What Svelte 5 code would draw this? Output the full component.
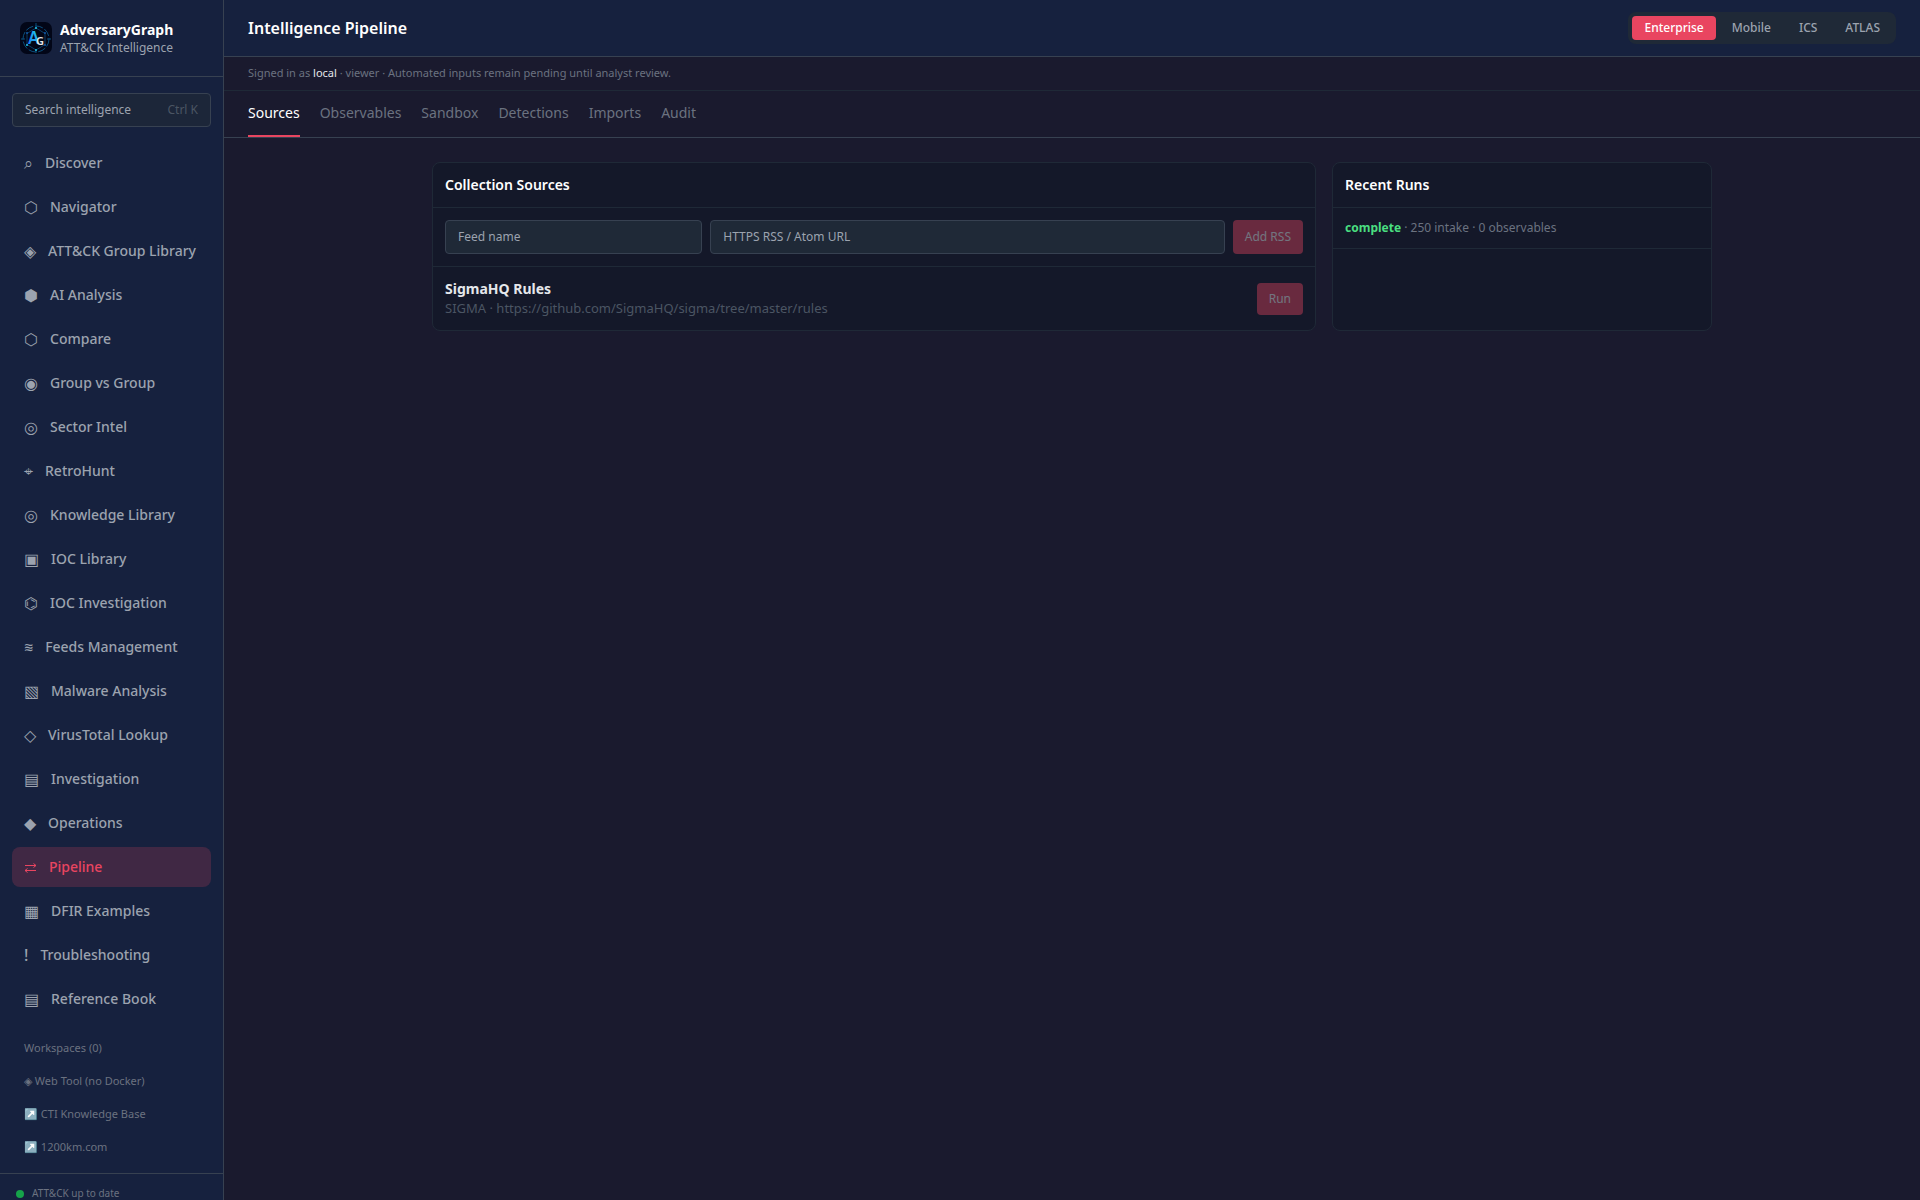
<script>
  const nav = [
    { icon: '⌕', label: 'Discover' },
    { icon: '⬡', label: 'Navigator' },
    { icon: '◈', label: 'ATT&CK Group Library' },
    { icon: '⬢', label: 'AI Analysis' },
    { icon: '⬡', label: 'Compare' },
    { icon: '◉', label: 'Group vs Group' },
    { icon: '◎', label: 'Sector Intel' },
    { icon: '⌖', label: 'RetroHunt' },
    { icon: '◎', label: 'Knowledge Library' },
    { icon: '▣', label: 'IOC Library' },
    { icon: '⌬', label: 'IOC Investigation' },
    { icon: '≋', label: 'Feeds Management', math: true },
    { icon: '▧', label: 'Malware Analysis' },
    { icon: '◇', label: 'VirusTotal Lookup' },
    { icon: '▤', label: 'Investigation' },
    { icon: '◆', label: 'Operations' },
    { icon: 'arrows', label: 'Pipeline' },
    { icon: '▦', label: 'DFIR Examples' },
    { icon: '!', label: 'Troubleshooting' },
    { icon: '▤', label: 'Reference Book' }
  ]
  const links = ['◈ Web Tool (no Docker)', '↗️ CTI Knowledge Base', '↗️ 1200km.com']
  const domains = ['Enterprise', 'Mobile', 'ICS', 'ATLAS']
  const tabs = ['Sources', 'Observables', 'Sandbox', 'Detections', 'Imports', 'Audit']
  const sources = [
    { name: 'SigmaHQ Rules', type: 'SIGMA', url: 'https://github.com/SigmaHQ/sigma/tree/master/rules' }
  ]
  const runs = [{ status: 'complete', intake: 250, observables: 0 }]

  let page = $state('Pipeline')
  let domain = $state('Enterprise')
  let tab = $state('Sources')
  let feedName = $state('')
  let feedUrl = $state('')
</script>

<div class="app">
  <aside class="sidebar">
    <div class="brand">
      <svg class="logo" viewBox="0 0 32 32" aria-hidden="true">
        <defs>
          <linearGradient id="a-fill" x1="0" y1="1" x2="1" y2="0">
            <stop offset="0" stop-color="#1d6cf0" />
            <stop offset="1" stop-color="#22e3ee" />
          </linearGradient>
        </defs>
        <rect width="32" height="32" rx="7" fill="#020617" />
        <g fill="none" stroke="#0b4f7d">
          <circle cx="16" cy="17" r="13" stroke-dasharray="8 2" />
          <path d="M16 6 25 11.5V22.5L16 28 7 22.5V11.5Z" stroke="#0a3d66" />
          <path d="M16 1v5M16 28v3M1 17h4M27 17h4" />
        </g>
        <g fill="#22c8e6">
          <circle cx="16" cy="6" r="1" />
          <circle cx="7" cy="23" r="1" />
          <circle cx="16" cy="28" r="1" />
          <circle cx="7" cy="11" r="1" fill="#1259a8" />
          <circle cx="25" cy="11" r="1" fill="#1259a8" />
          <circle cx="25" cy="23" r="1" fill="#1259a8" />
        </g>
        <text x="8" y="22" font-size="17" font-weight="600" fill="url(#a-fill)">A</text>
        <text x="16" y="23" font-size="11" font-weight="600" fill="#e5e7eb">G</text>
      </svg>
      <div>
        <div class="brand-name">AdversaryGraph</div>
        <div class="brand-sub">ATT&amp;CK Intelligence</div>
      </div>
    </div>

    <nav>
      <button class="search">
        <span>Search intelligence</span>
        <span class="shortcut">Ctrl K</span>
      </button>
      {#each nav as item}
        <button class="nav-item" class:active={page === item.label} onclick={() => (page = item.label)}>
          {#if item.icon === 'arrows'}
            <svg class="arrows" viewBox="0 0 13 16" aria-hidden="true">
              <path d="M1 6.5H12M9.5 4.5 12 6.5 9.5 8.5M12 11.5H1M3.5 9.5 1 11.5 3.5 13.5" />
            </svg>
          {:else}
            <span class="nav-icon" class:math={item.math}>{item.icon}</span>
          {/if}
          {item.label}
        </button>
      {/each}
    </nav>

    <div class="links">
      <button class="link">Workspaces (0)</button>
      {#each links as link}
        <a class="link" href="#top">{link}</a>
      {/each}
    </div>

    <div class="sync">
      <span class="dot"></span>
      ATT&amp;CK up to date
    </div>
  </aside>

  <main>
    <header>
      <h1>Intelligence Pipeline</h1>
      <div class="domains">
        {#each domains as name}
          <button class:active={domain === name} onclick={() => (domain = name)}>{name}</button>
        {/each}
      </div>
    </header>

    <p class="session">
      Signed in as <span>local</span> · viewer · Automated inputs remain pending until analyst review.
    </p>

    <div class="tabs" role="tablist">
      {#each tabs as name}
        <button role="tab" aria-selected={tab === name} class:active={tab === name} onclick={() => (tab = name)}>{name}</button>
      {/each}
    </div>

    <div class="content">
      <section class="card">
        <h2>Collection Sources</h2>
        <form class="feed-form" onsubmit={(e) => e.preventDefault()}>
          <input bind:value={feedName} placeholder="Feed name" aria-label="Feed name" />
          <input bind:value={feedUrl} placeholder="HTTPS RSS / Atom URL" aria-label="HTTPS RSS / Atom URL" />
          <button class="primary" disabled>Add RSS</button>
        </form>
        {#each sources as source}
          <div class="source">
            <div>
              <div class="source-name">{source.name}</div>
              <div class="source-url">{source.type} · {source.url}</div>
            </div>
            <button class="primary" disabled>Run</button>
          </div>
        {/each}
      </section>

      <section class="card">
        <h2>Recent Runs</h2>
        {#each runs as run}
          <div class="run">
            <strong>{run.status}</strong> · {run.intake} intake · {run.observables} observables
          </div>
        {/each}
      </section>
    </div>
  </main>
</div>

<style>
  :global(body) {
    background: #1a1a2e;
  }

  .app {
    display: flex;
    height: 100vh;
    overflow: hidden;
    background: #1a1a2e;
    color: #e5e7eb;
    font-family: "Noto Sans", sans-serif;
    font-size: 14px;
    line-height: 20px;
  }

  .app * {
    box-sizing: border-box;
  }

  button,
  input {
    font: inherit;
    color: inherit;
    margin: 0;
  }

  button {
    border: 0;
    padding: 0;
    background: none;
    cursor: pointer;
  }

  .sidebar {
    display: flex;
    flex-direction: column;
    flex: none;
    width: 224px;
    background: #16213e;
    border-right: 1px solid #374151;
  }

  .brand {
    display: flex;
    align-items: center;
    gap: 8px;
    padding: 20px;
    border-bottom: 1px solid #374151;
  }

  .logo {
    flex: none;
    width: 32px;
    height: 32px;
  }

  .brand-name {
    color: #fff;
    font-weight: 700;
  }

  .brand-sub {
    color: #9ca3af;
    font-size: 12px;
    line-height: 16px;
  }

  nav {
    display: flex;
    flex-direction: column;
    gap: 4px;
    padding: 16px 12px 12px;
  }

  .search {
    display: flex;
    justify-content: space-between;
    margin-bottom: 12px;
    padding: 8px 12px;
    border: 1px solid #374151;
    border-radius: 4px;
    background: rgba(31, 41, 55, 0.7);
    color: #9ca3af;
    font-size: 12px;
    line-height: 16px;
  }

  .shortcut {
    color: #4b5563;
  }

  .nav-item {
    display: flex;
    align-items: center;
    gap: 12px;
    height: 40px;
    padding: 0 12px;
    border-radius: 8px;
    color: #9ca3af;
    font-weight: 500;
    text-align: left;
    white-space: nowrap;
  }

  .nav-item.active {
    background: rgba(233, 69, 96, 0.2);
    color: #e94560;
  }

  .nav-icon {
    font-size: 16px;
    line-height: 24px;
  }

  .nav-icon.math {
    font-family: "Noto Sans Math", "Noto Sans", sans-serif;
  }

  .arrows {
    flex: none;
    width: 13px;
    height: 16px;
    fill: none;
    stroke: currentColor;
  }

  .links {
    display: flex;
    flex-direction: column;
    padding: 0 12px 10px;
  }

  .link {
    padding: 8px 12px;
    color: #6b7280;
    font-size: 11px;
    line-height: 17px;
    text-align: left;
    text-decoration: none;
  }

  .sync {
    display: flex;
    align-items: center;
    gap: 8px;
    padding: 12px 16px;
    border-top: 1px solid #374151;
    color: #6b7280;
    font-size: 10px;
    line-height: 15px;
  }

  .dot {
    width: 8px;
    height: 8px;
    border-radius: 50%;
    background: #16a34a;
  }

  main {
    flex: 1;
    min-width: 0;
  }

  header {
    display: flex;
    align-items: center;
    justify-content: space-between;
    padding: 12px 24px;
    background: #16213e;
    border-bottom: 1px solid #374151;
  }

  h1 {
    margin: 0;
    color: #fff;
    font-size: 16px;
    font-weight: 600;
    line-height: 24px;
  }

  .domains {
    display: flex;
    gap: 4px;
    padding: 4px;
    border-radius: 8px;
    background: #1f2937;
  }

  .domains button {
    padding: 4px 12px;
    border-radius: 4px;
    color: #9ca3af;
    font-size: 12px;
    font-weight: 500;
    line-height: 16px;
  }

  .domains button.active {
    background: #e94560;
    color: #fff;
  }

  .session {
    margin: 0;
    padding: 8px 24px 9px;
    border-bottom: 1px solid #1f2937;
    color: #6b7280;
    font-size: 11px;
    line-height: 16px;
  }

  .session span {
    color: #e5e7eb;
  }

  .tabs {
    display: flex;
    gap: 20px;
    padding: 0 24px;
    border-bottom: 1px solid #374151;
  }

  .tabs button {
    padding: 12px 0;
    border-bottom: 2px solid transparent;
    color: #6b7280;
  }

  .tabs button.active {
    border-bottom-color: #e94560;
    color: #fff;
  }

  .content {
    display: grid;
    grid-template-columns: minmax(0, 1fr) 380px;
    gap: 16px;
    max-width: 1280px;
    margin: 24px auto;
  }

  .card {
    border: 1px solid #1f2937;
    border-radius: 8px;
    background: rgba(17, 24, 39, 0.6);
  }

  h2 {
    margin: 0;
    padding: 12px;
    border-bottom: 1px solid #1f2937;
    color: #fff;
    font-size: 14px;
    font-weight: 600;
  }

  .feed-form {
    display: grid;
    grid-template-columns: 1fr 2fr auto;
    gap: 8px;
    padding: 12px;
    border-bottom: 1px solid #1f2937;
  }

  input {
    min-width: 0;
    padding: 8px 12px;
    border: 1px solid #374151;
    border-radius: 4px;
    background: #1f2937;
    font-size: 12px;
    line-height: 16px;
  }

  input::placeholder {
    color: #9ca3af;
    opacity: 1;
  }

  .primary {
    padding: 8px 12px;
    border-radius: 4px;
    background: #e94560;
    color: #fff;
    font-size: 12px;
    line-height: 16px;
  }

  .primary:disabled {
    opacity: 0.4;
    cursor: default;
  }

  .source {
    display: flex;
    align-items: center;
    justify-content: space-between;
    padding: 12px;
  }

  .source-name {
    font-weight: 700;
  }

  .source-url {
    color: #4b5563;
    font-size: 13px;
    line-height: 19px;
  }

  .run {
    padding: 12px;
    border-bottom: 1px solid #1f2937;
    color: #6b7280;
    font-size: 12px;
    line-height: 16px;
  }

  .run strong {
    color: #4ade80;
    font-weight: 700;
  }
</style>
